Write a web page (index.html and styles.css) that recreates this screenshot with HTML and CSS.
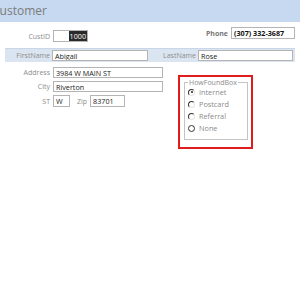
FILE: index.html
```html
<!DOCTYPE html>
<html>
<head>
<meta charset="utf-8">
<link rel="stylesheet" href="styles.css">
</head>
<body>
<div class="header"><span class="title">Customer</span></div>
<div class="row1">
  <div class="pair">
    <span class="lbl w50">CustID</span>
    <span class="box custid"><span class="sel">1000</span></span>
  </div>
  <div class="pair phone">
    <span class="lbl bold">Phone</span>
    <span class="box phonebox">(307) 332-3687</span>
  </div>
</div>
<div class="band">
  <span class="lbl w45">FirstName</span>
  <span class="box fname">Abigail</span>
  <span class="lbl w48">LastName</span>
  <span class="box lname">Rose</span>
</div>
<div class="lower">
  <div class="leftcol">
    <div class="pair r"><span class="lbl w50">Address</span><span class="box wide">3984 W MAIN ST</span></div>
    <div class="pair r"><span class="lbl w50">City</span><span class="box wide">Riverton</span></div>
    <div class="pair r"><span class="lbl w50">ST</span><span class="box st">W</span><span class="lbl zip">Zip</span><span class="box zipbox">83701</span></div>
  </div>
  <div class="redbox">
    <fieldset class="group">
      <legend>HowFoundBox</legend>
      <div class="opt"><span class="radio on"></span>Internet</div>
      <div class="opt"><span class="radio"></span>Postcard</div>
      <div class="opt"><span class="radio"></span>Referral</div>
      <div class="opt"><span class="radio full"></span>None</div>
    </fieldset>
  </div>
</div>
</body>
</html>
```
FILE: styles.css
```css
html, body { margin: 0; padding: 0; background: #fff; }
body { width: 300px; height: 300px; overflow: hidden; font-family: "Open Sans", "DejaVu Sans", sans-serif; font-size: 7px; color: #222; }
.header { height: 22px; background: #c6d9f0; overflow: hidden; }
.title { display: block; margin-left: -8px; font-size: 12px; line-height: 22px; color: #7b7b7b; }
.row1 { display: flex; align-items: flex-start; padding-right: 5px; }
.pair { display: flex; align-items: center; }
.row1 > .pair:first-child { margin-top: 8px; }
.phone { margin-left: auto; margin-top: 5px; }
.lbl { color: #8c8c8c; font-size: 7px; white-space: nowrap; }
.w50 { width: 50px; text-align: right; margin-right: 3px; }
.w45 { width: 45px; text-align: right; margin-right: 2px; }
.w48 { width: 48px; text-align: right; margin-right: 2px; }
.bold { font-weight: bold; color: #777; margin-right: 3px; font-size: 7px; }
.box { display: flex; align-items: center; box-sizing: border-box; height: 12px; border: 1px solid #b4b4b4; background: #fff; padding: 0 2px; font-size: 7.2px; color: #222; white-space: nowrap; overflow: hidden; }
.custid { width: 35px; justify-content: flex-end; padding: 0; }
.sel { background: #2a2a2a; color: #fff; padding: 0 1px; line-height: 10px; }
.phonebox { width: 64px; font-weight: bold; color: #111; }
.band { display: flex; align-items: center; margin: 6px 5px 0 5px; height: 14px; background: #dbe5f1; border-top: 1px solid #c8d6e8; box-sizing: border-box; }
.fname { width: 96px; height: 11px; }
.lname { width: 95px; height: 11px; }
.lower { display: flex; align-items: flex-start; margin-top: 5px; }
.leftcol { display: flex; flex-direction: column; gap: 3px; }
.wide { width: 110px; height: 11px; }
.st { width: 17px; }
.zip { margin: 0 3px 0 7px; }
.zipbox { width: 35px; }
.redbox { margin: 8px 0 0 15px; width: 75px; height: 74px; box-sizing: border-box; border: 2px solid #e01b1b; padding: 2px 3px 0 4px; }
.group { margin: 0; padding: 0 0 0 3px; border: 1px solid #c4c4c4; height: 61px; box-sizing: border-box; }
.group legend { padding: 0 1px; color: #8c8c8c; font-size: 7px; line-height: 7px; margin-left: 0; }
.opt { display: flex; align-items: center; height: 12px; color: #8a8a8a; font-size: 7.3px; }
.radio { width: 5px; height: 5px; border-radius: 50%; border: 1px solid #e4e4e4; border-top-color: #333; border-left-color: #333; margin-right: 4px; position: relative; }
.radio.on::after { content: ""; position: absolute; left: 1.5px; top: 1.5px; width: 2px; height: 2px; border-radius: 50%; background: #222; }
.radio.full { border-color: #333; }
```
